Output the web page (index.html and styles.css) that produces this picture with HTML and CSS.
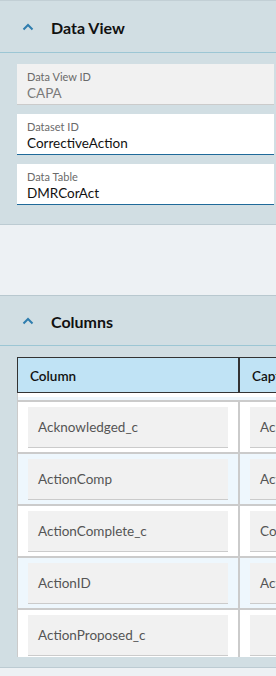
FILE: index.html
```html
<!DOCTYPE html>
<html>
<head>
<meta charset="utf-8">
<link rel="stylesheet" href="styles.css">
</head>
<body>
<section class="panel">
  <header class="panel-head first">
    <svg class="chev" width="12" height="8" viewBox="0 0 12 8"><path d="M1.5 6.5 L6 2 L10.5 6.5" fill="none" stroke="#2f7dae" stroke-width="2"/></svg>
    <h2>Data View</h2>
  </header>
  <div class="panel-body fields">
    <div class="field disabled"><span class="lbl">Data View ID</span><span class="val">CAPA</span></div>
    <div class="field"><span class="lbl">Dataset ID</span><span class="val">CorrectiveAction</span></div>
    <div class="field"><span class="lbl">Data Table</span><span class="val">DMRCorAct</span></div>
  </div>
</section>
<div class="spacer"></div>
<section class="panel">
  <header class="panel-head">
    <svg class="chev" width="12" height="8" viewBox="0 0 12 8"><path d="M1.5 6.5 L6 2 L10.5 6.5" fill="none" stroke="#2f7dae" stroke-width="2"/></svg>
    <h2>Columns</h2>
  </header>
  <div class="panel-body tablewrap">
    <div class="grid">
      <div class="thead">
        <div class="th c1">Column</div>
        <div class="th c2">Caption</div>
      </div>
      <div class="tbody">
        <div class="toprow"></div>
        <div class="tr"><div class="td c1"><div class="inp">Acknowledged_c</div></div><div class="td c2"><div class="inp">Acknowledged</div></div></div>
        <div class="tr alt"><div class="td c1"><div class="inp">ActionComp</div></div><div class="td c2"><div class="inp">Action Complete</div></div></div>
        <div class="tr"><div class="td c1"><div class="inp">ActionComplete_c</div></div><div class="td c2"><div class="inp">Complete</div></div></div>
        <div class="tr alt"><div class="td c1"><div class="inp">ActionID</div></div><div class="td c2"><div class="inp">Action ID</div></div></div>
        <div class="tr last"><div class="td c1"><div class="inp">ActionProposed_c</div></div><div class="td c2"><div class="inp"></div></div></div>
      </div>
    </div>
  </div>
</section>
<div class="spacer bottom"></div>
</body>
</html>
```
FILE: styles.css
```css
html, body { margin: 0; padding: 0; }
body {
  width: 276px;
  height: 676px;
  overflow: hidden;
  background: #edf1f4;
  font-family: Lato, "Open Sans", sans-serif;
  color: #111;
}
.panel { background: #d1dee3; }
.panel-head {
  height: 49px;
  display: flex;
  align-items: center;
  border-top: 1px solid #b8c8cf;
  border-bottom: 1px solid #9cc6d4;
}
.panel-head.first { height: 51px; border-top-color: #c2cfd5; }
.chev { margin-left: 22px; margin-top: 1px; }
.panel-head h2 {
  margin: 0 0 0 17px;
  font-size: 16px;
  font-weight: 700;
  color: #111;
  padding-top: 1px;
}
.fields {
  display: flex;
  flex-direction: column;
  gap: 9px;
  padding: 11px 2px 19px 17px;
}
.field {
  height: 34px;
  background: #fff;
  border-bottom: 1px solid #1f6a9a;
  padding: 6px 10px 0;
  display: flex;
  flex-direction: column;
}
.field.disabled { background: #f1f1f1; border-bottom-color: #cbcbcb; }
.lbl { font-size: 11px; color: #6a6a6a; line-height: 14px; }
.val { font-size: 13.5px; line-height: 18px; color: #111; }
.field.disabled .val { color: #7a7a7a; }
.spacer { height: 70px; border-top: 1px solid #bccbd2; }
.spacer.bottom { height: 8px; border-top: 1px solid #bccbd2; }
.tablewrap { padding: 11px 0 10px 17px; overflow: hidden; }
.grid { width: 470px; }
.thead {
  display: flex;
  height: 34px;
  background: #c0e3f5;
  border: 1px solid #333;
}
.th {
  font-size: 13.5px;
  font-weight: 600;
  color: #111;
  display: flex;
  align-items: center;
  padding-left: 12px;
  padding-top: 1px;
}
.thead .c1 { width: 208px; border-right: 2px solid #333; }
.tbody { border-left: 1px solid #cbcbcb; background: #fff; }
.toprow { height: 4px; background: #fff; border-bottom: 3px solid #eef7fd; }
.tr {
  display: flex;
  height: 50px;
  border-top: 2px solid #cbcbcb;
  background: #fff;
}
.tr.alt { background: #eef7fd; }
.tr.last { height: 47px; }
.td { padding: 5px 10px 0; box-sizing: border-box; }
.td.c1 { width: 222px; border-right: 2px solid #cbcbcb; }
.td.c2 { width: 222px; }
.inp {
  height: 40px;
  background: #f1f1f1;
  border-bottom: 1px solid #cbcbcb;
  font-size: 13.5px;
  color: #555;
  display: flex;
  align-items: center;
  padding-left: 10px;
}
```
